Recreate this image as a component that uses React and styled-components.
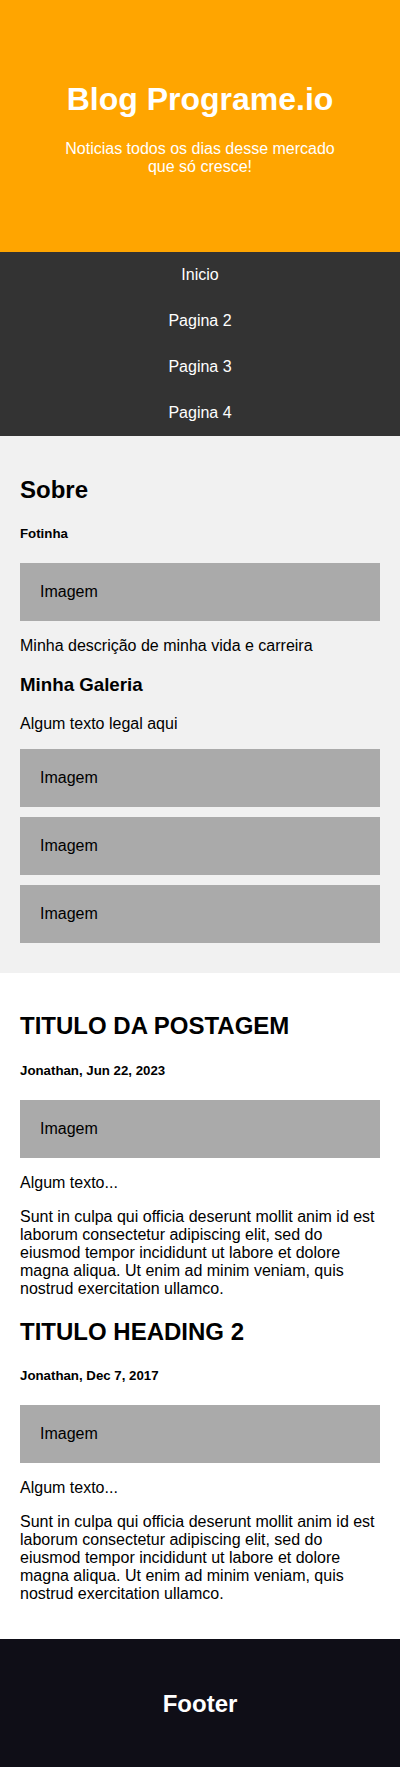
import React from "react";
import styled, { createGlobalStyle } from "styled-components";

const GlobalStyle = createGlobalStyle`
  * {
    box-sizing: border-box;
  }
  body {
    margin: 0;
    font-family: "Liberation Sans", Arial, sans-serif;
    color: #000;
  }
`;

const links = ["Inicio", "Pagina 2", "Pagina 3", "Pagina 4"];

const posts = [
  { title: "TITULO DA POSTAGEM", meta: "Jonathan, Jun 22, 2023" },
  { title: "TITULO HEADING 2", meta: "Jonathan, Dec 7, 2017" },
];

const lorem =
  "Sunt in culpa qui officia deserunt mollit anim id est laborum consectetur adipiscing elit, sed do eiusmod tempor incididunt ut labore et dolore magna aliqua. Ut enim ad minim veniam, quis nostrud exercitation ullamco.";

const App = () => {
  return (
    <>
      <GlobalStyle />
      <Header>
        <Title>Blog Programe.io</Title>
        <Tagline>Noticias todos os dias desse mercado que só cresce!</Tagline>
      </Header>

      <Nav>
        {links.map((link) => (
          <NavLink key={link} href="#">
            {link}
          </NavLink>
        ))}
      </Nav>

      <Row>
        <Side>
          <SectionTitle>Sobre</SectionTitle>
          <Meta>Fotinha</Meta>
          <FakeImg>Imagem</FakeImg>
          <Text>Minha descrição de minha vida e carreira</Text>
          <SubTitle>Minha Galeria</SubTitle>
          <Text>Algum texto legal aqui</Text>
          <FakeImg>Imagem</FakeImg>
          <FakeImg>Imagem</FakeImg>
          <FakeImg>Imagem</FakeImg>
        </Side>

        <Main>
          {posts.map((post) => (
            <Post key={post.title}>
              <SectionTitle>{post.title}</SectionTitle>
              <Meta>{post.meta}</Meta>
              <FakeImg>Imagem</FakeImg>
              <Text>Algum texto...</Text>
              <Text>{lorem}</Text>
            </Post>
          ))}
        </Main>
      </Row>

      <Footer>
        <SectionTitle>Footer</SectionTitle>
      </Footer>
    </>
  );
};

const Header = styled.header`
  padding: 60px;
  text-align: center;
  background-color: #ffa500;
  color: #fff;
`;
const Title = styled.h1`
  font-size: 32px;
  margin: 21.44px 0;
`;
const Tagline = styled.p`
  font-size: 16px;
  margin: 16px 0;
`;
const Nav = styled.nav`
  display: flex;
  flex-direction: column;
  background-color: #333;
`;
const NavLink = styled.a`
  display: block;
  padding: 14px 20px;
  color: #fff;
  font-size: 16px;
  text-align: center;
  text-decoration: none;
`;
const Row = styled.div`
  display: flex;
  flex-direction: column;
`;
const Side = styled.section`
  background-color: #f1f1f1;
  padding: 20px;
`;
const Main = styled.main`
  background-color: #fff;
  padding: 20px;
`;
const Post = styled.article``;
const SectionTitle = styled.h2`
  font-size: 24px;
  margin: 19.92px 0;
`;
const SubTitle = styled.h3`
  font-size: 18.72px;
  margin: 18.72px 0;
`;
const Meta = styled.h5`
  font-size: 13.28px;
  margin: 22.18px 0;
`;
const Text = styled.p`
  font-size: 16px;
  margin: 16px 0;
`;
const FakeImg = styled.div`
  width: 100%;
  padding: 20px;
  margin-bottom: 10px;
  background-color: #aaa;
  font-size: 16px;
`;
const Footer = styled.footer`
  padding: 31px 20px;
  text-align: center;
  background-color: #0f0e17;
  color: #fff;
`;

export default App;
